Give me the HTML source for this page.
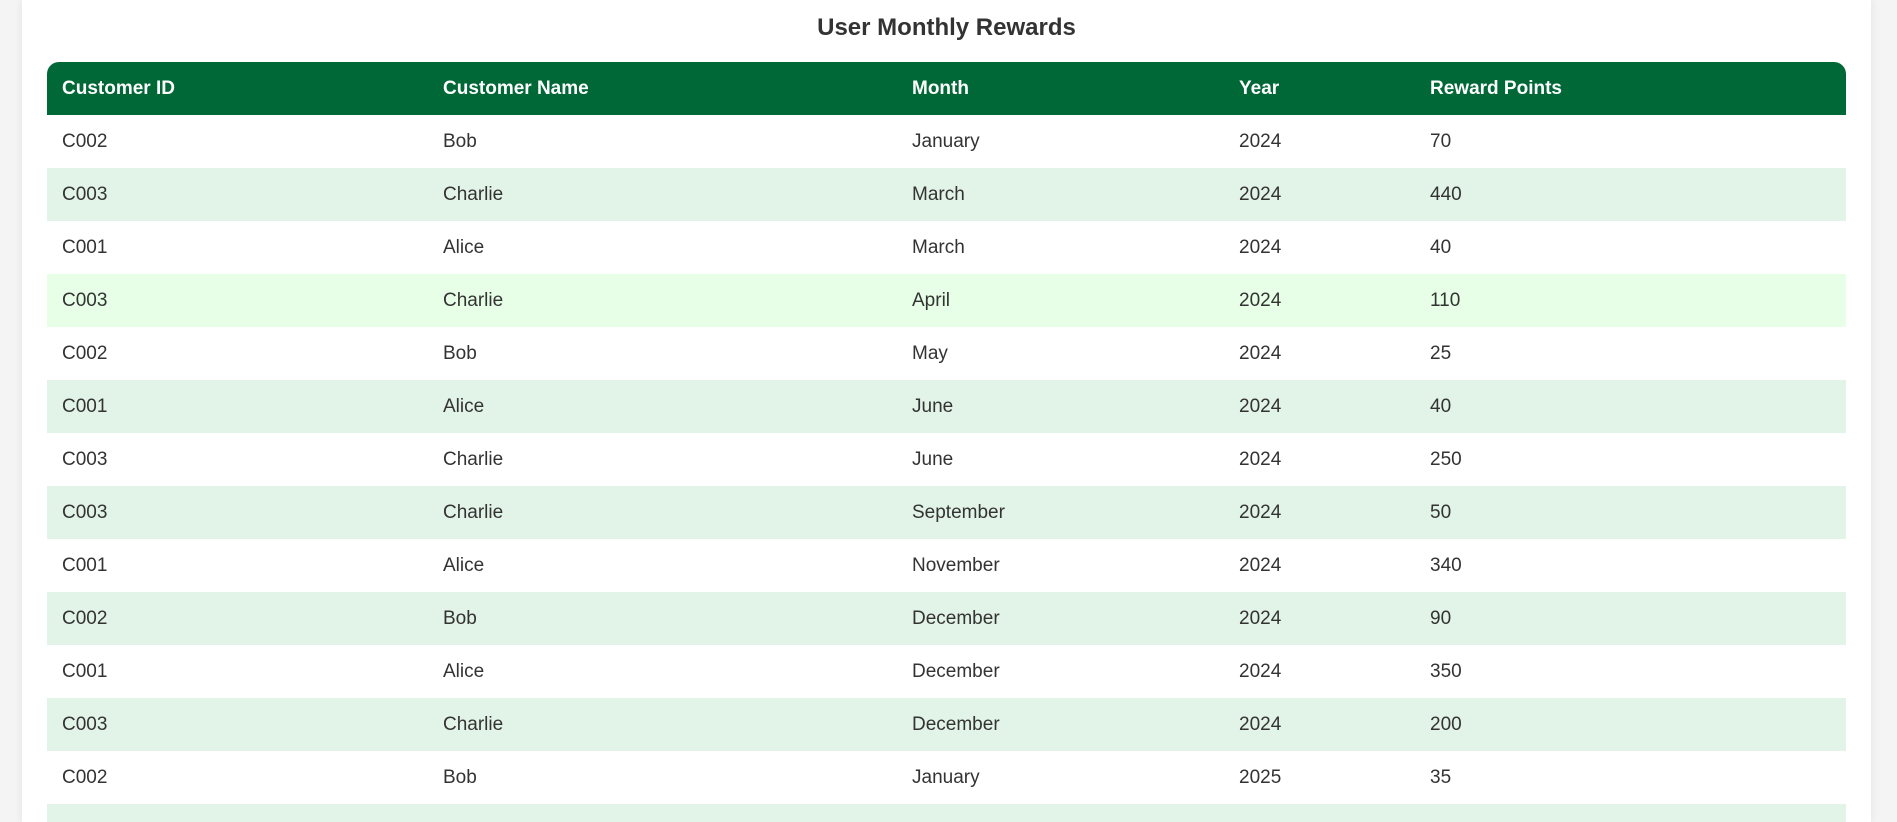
<!DOCTYPE html>
<html><head><style>
html,body{margin:0;padding:0;width:1897px;height:822px;overflow:hidden;background:#f4f4f4;font-family:"Liberation Sans",Arial,sans-serif;}
.c{position:absolute;left:22px;top:0;width:1849px;height:822px;background:#fff;box-shadow:0 0 8px rgba(0,0,0,0.08);overflow:hidden;}
h2{position:absolute;left:0;width:100%;top:13px;margin:0;text-align:center;font-size:24px;font-weight:bold;color:#333;line-height:30px;}
table{position:absolute;left:25px;top:62px;width:1799px;border-collapse:collapse;table-layout:fixed;}
th,td{text-align:left;padding:0 0 0 15px;height:53px;font-size:19px;}
th{background:#006837;color:#fff;font-weight:bold;}
th:first-child{border-top-left-radius:12px}
th:last-child{border-top-right-radius:12px}
td{color:#333;}
tr:nth-child(even) td{background:#e2f3e7;}
tr.h td{background:#e6ffe6;}
</style></head><body><div class="c">
<h2>User Monthly Rewards</h2>
<table>
<colgroup><col style="width:381px"><col style="width:469px"><col style="width:327px"><col style="width:191px"><col></colgroup>
<thead><tr><th>Customer ID</th><th>Customer Name</th><th>Month</th><th>Year</th><th>Reward Points</th></tr></thead>
<tbody>
<tr><td>C002</td><td>Bob</td><td>January</td><td>2024</td><td>70</td></tr>
<tr><td>C003</td><td>Charlie</td><td>March</td><td>2024</td><td>440</td></tr>
<tr><td>C001</td><td>Alice</td><td>March</td><td>2024</td><td>40</td></tr>
<tr class="h"><td>C003</td><td>Charlie</td><td>April</td><td>2024</td><td>110</td></tr>
<tr><td>C002</td><td>Bob</td><td>May</td><td>2024</td><td>25</td></tr>
<tr><td>C001</td><td>Alice</td><td>June</td><td>2024</td><td>40</td></tr>
<tr><td>C003</td><td>Charlie</td><td>June</td><td>2024</td><td>250</td></tr>
<tr><td>C003</td><td>Charlie</td><td>September</td><td>2024</td><td>50</td></tr>
<tr><td>C001</td><td>Alice</td><td>November</td><td>2024</td><td>340</td></tr>
<tr><td>C002</td><td>Bob</td><td>December</td><td>2024</td><td>90</td></tr>
<tr><td>C001</td><td>Alice</td><td>December</td><td>2024</td><td>350</td></tr>
<tr><td>C003</td><td>Charlie</td><td>December</td><td>2024</td><td>200</td></tr>
<tr><td>C002</td><td>Bob</td><td>January</td><td>2025</td><td>35</td></tr>
<tr><td>&nbsp;</td><td></td><td></td><td></td><td></td></tr>
</tbody></table>
</div></body></html>
